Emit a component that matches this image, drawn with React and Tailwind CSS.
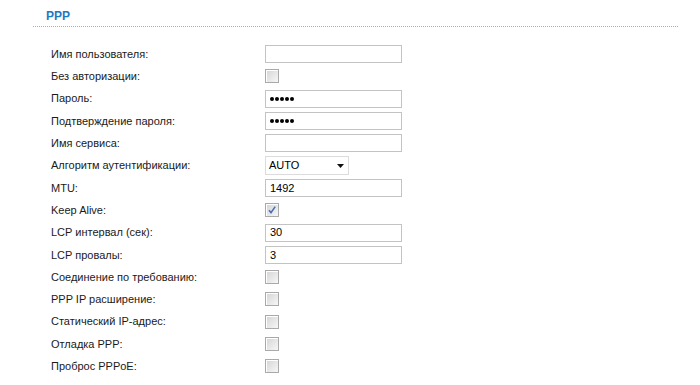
import React from 'react';

const rows = [
  { label: 'Имя пользователя:', type: 'text', value: '' },
  { label: 'Без авторизации:', type: 'check' },
  { label: 'Пароль:', type: 'password' },
  { label: 'Подтверждение пароля:', type: 'password' },
  { label: 'Имя сервиса:', type: 'text', value: '' },
  { label: 'Алгоритм аутентификации:', type: 'select', value: 'AUTO' },
  { label: 'MTU:', type: 'text', value: '1492' },
  { label: 'Keep Alive:', type: 'check', checked: true },
  { label: 'LCP интервал (сек):', type: 'text', value: '30' },
  { label: 'LCP провалы:', type: 'text', value: '3' },
  { label: 'Соединение по требованию:', type: 'check' },
  { label: 'PPP IP расширение:', type: 'check' },
  { label: 'Статический IP-адрес:', type: 'check' },
  { label: 'Отладка PPP:', type: 'check' },
  { label: 'Проброс PPPoE:', type: 'check' },
];

const CheckBox = ({ checked }) => (
  <span className="flex h-[14px] w-[14px] items-center justify-center border border-[#a9a9a9] bg-gradient-to-br from-[#d4d4d4] to-[#f7f7f7] shadow-[inset_1px_1px_0_#fff]">
    {checked && (
      <svg width="10" height="10" viewBox="0 0 10 10">
        <path d="M2 5.2 L4 7.6 L8.2 1.6" fill="none" stroke="#4a6fb5" strokeWidth="1.6" />
      </svg>
    )}
  </span>
);

const Field = ({ row }) => {
  if (row.type === 'check') return <CheckBox checked={row.checked} />;
  if (row.type === 'select')
    return (
      <div className="flex h-[19px] w-[84px] items-center justify-between border border-[#dcdcdc] bg-white pl-[3px] pr-[4px] text-[11px] text-black">
        <span>{row.value}</span>
        <svg width="7" height="4" viewBox="0 0 7 4">
          <path d="M0 0 H7 L3.5 4 Z" fill="#111" />
        </svg>
      </div>
    );
  return (
    <div className="flex h-[18px] w-[137px] items-center border border-[#c3c3c3] bg-white px-[4px] text-[11px] text-black">
      {row.type === 'password' ? (
        <span className="flex gap-[1px]">
          {[0, 1, 2, 3, 4].map((i) => (
            <span key={i} className="h-[4px] w-[4px] rounded-full bg-black" />
          ))}
        </span>
      ) : (
        row.value
      )}
    </div>
  );
};

export default function App() {
  return (
    <div className="h-[385px] w-[700px] bg-white font-['Liberation_Sans',Arial,sans-serif] text-[#1a1a1a]">
      <div className="ml-[33px] mr-[22px] pt-[9px]">
        <h2 className="pl-[13px] text-[12px] font-bold leading-[14px] text-[#1e7ac3]">PPP</h2>
        <div className="mt-[3px] border-b border-dotted border-[#8fb6cf]" />
      </div>
      <div className="pl-[51px] pt-[16px]">
        {rows.map((row) => (
          <div key={row.label} className="flex h-[22.3px] items-center">
            <span className="w-[214px] text-[11px]">{row.label}</span>
            <Field row={row} />
          </div>
        ))}
      </div>
    </div>
  );
}
